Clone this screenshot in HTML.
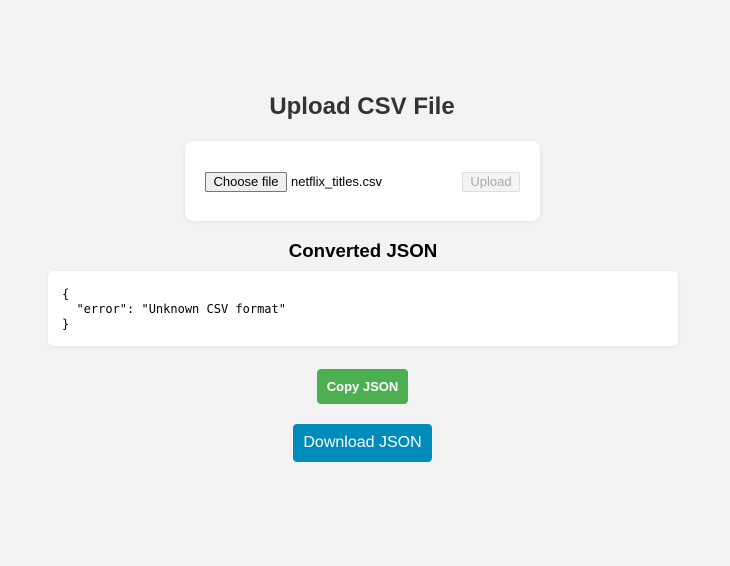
<!DOCTYPE html>
<html><head><style>
body{margin:0;background:#f3f3f3;font-family:"Liberation Sans",Arial,sans-serif;width:730px;height:566px;position:relative;overflow:hidden}
.a{position:absolute}
h1{position:absolute;left:-3px;width:730px;top:93px;margin:0;text-align:center;font-size:24px;font-weight:bold;color:#333;line-height:28px}
.card{left:185px;top:141px;width:355px;height:80px;background:#fff;border-radius:8px;box-shadow:0 1px 4px rgba(0,0,0,.08)}
.choose{left:205px;top:172px;width:80px;height:18px;border:1px solid #767676;background:#efefef;border-radius:2px;font-size:13px;line-height:18px;text-align:center;color:#000}
.fname{left:291px;top:174px;font-size:13px;color:#000}
.up{left:462px;top:172px;width:56px;height:18px;border:1px solid #ddd;background:#f4f4f4;border-radius:2px;font-size:13px;line-height:18px;text-align:center;color:#aaa}
h2{position:absolute;left:-2px;width:730px;top:240px;margin:0;text-align:center;font-size:18.7px;font-weight:bold;color:#000;line-height:22px}
.pre{left:48px;top:271px;width:630px;height:75px;background:#fff;border-radius:5px;box-shadow:0 1px 3px rgba(0,0,0,.08)}
pre{position:absolute;left:62px;top:287px;margin:0;font-family:"DejaVu Sans Mono","Liberation Mono",monospace;font-size:12px;line-height:15px;color:#000}
.copy{left:317px;top:369px;width:91px;height:35px;background:#4caf50;color:#fff;border-radius:4px;font-size:13px;font-weight:bold;text-align:center;line-height:35px}
.dl{left:293px;top:424px;width:139px;height:38px;background:#008cba;color:#fff;border-radius:4px;font-size:16px;text-align:center;line-height:38px}
</style></head><body>
<h1>Upload CSV File</h1>
<div class="a card"></div>
<div class="a choose">Choose file</div>
<div class="a fname">netflix_titles.csv</div>
<div class="a up">Upload</div>
<h2>Converted JSON</h2>
<div class="a pre"></div>
<pre>{
  "error": "Unknown CSV format"
}</pre>
<div class="a copy">Copy JSON</div>
<div class="a dl">Download JSON</div>
</body></html>
